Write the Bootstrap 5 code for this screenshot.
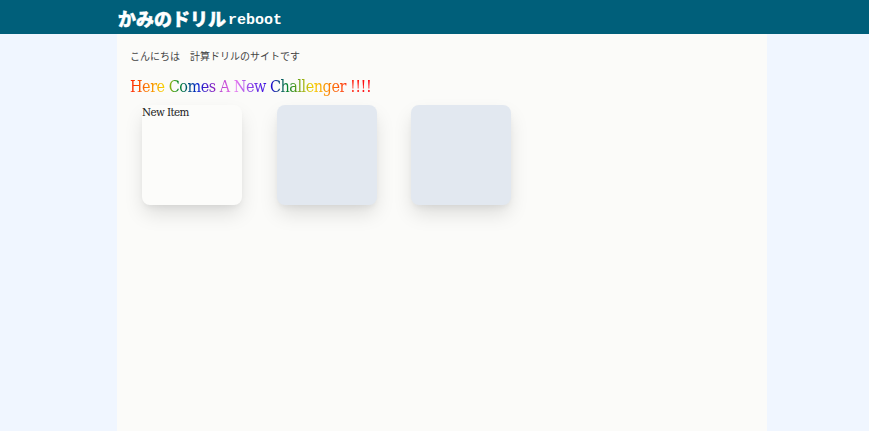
<!DOCTYPE html>
<html lang="ja">
<head>
  <meta charset="UTF-8">
  <title>かみのドリル reboot</title>
  <link href="https://cdn.jsdelivr.net/npm/bootstrap@5.3.0/dist/css/bootstrap.min.css" rel="stylesheet">
  <style>
    html, body { height: 100%; }
    body { background: #f0f6ff; font-family: "DejaVu Serif Condensed", "DejaVu Serif", "Noto Sans CJK JP", serif; color: #333; overflow: hidden; }
    .site-head { height: 34px; background: #005f7a; padding-left: 118px; }
    .logo-main { font-family: "Noto Sans CJK JP", sans-serif; font-weight: 900; font-size: 18px; color: #fff; line-height: 1; margin-top: 1px; -webkit-text-stroke: .4px #fff; }
    .logo-sub { font-family: "Liberation Mono", monospace; font-weight: 700; font-size: 15px; color: #fff; line-height: 1; margin-left: 2px; margin-top: 7px; }
    .page-body { width: 650px; margin-left: 117px; min-height: 400px; background: #fbfbf9; padding: 15px 13px; }
    .hello { font-family: "Noto Sans CJK JP", sans-serif; font-size: 10px; line-height: 14px; color: #444; }
    .rainbow { display: inline-block; margin: 12px 0 7px; font-size: 16px; letter-spacing: -.46px; line-height: 23px; font-weight: 400;
      background: linear-gradient(90deg, #ff2000 0%, #f7d000 14%, #008a20 20%, #0020d0 28%, #a020c0 36%, #f080f0 43%, #2000e0 58%, #008030 65%, #f8d000 76%, #ff3010 90%, #ff0010 100%);
      -webkit-background-clip: text; background-clip: text; color: transparent; }
    .item-row { padding-left: 12px; gap: 34.5px; }
    .item-box { width: 100px; height: 100px; border-radius: 8px; background: #e2e8f0; box-shadow: 0 10px 20px -2px rgba(0,0,0,.13), 0 4px 6px -2px rgba(0,0,0,.06); }
    .item-new { background: #fcfcfa; font-size: 11.5px; letter-spacing: -.6px; line-height: 15px; color: #222; }
  </style>
</head>
<body>
<header class="site-head d-flex align-items-center">
  <span class="logo-main">かみのドリル</span>
  <span class="logo-sub">reboot</span>
</header>
<main class="page-body">
  <p class="hello mb-0">こんにちは　計算ドリルのサイトです</p>
  <h1 class="rainbow">Here Comes A New Challenger !!!!</h1>
  <div class="item-row d-flex">
    <div class="item-box item-new">New Item</div>
    <div class="item-box"></div>
    <div class="item-box"></div>
  </div>
</main>
<script src="https://cdn.jsdelivr.net/npm/bootstrap@5.3.0/dist/js/bootstrap.bundle.min.js"></script>
</body>
</html>
